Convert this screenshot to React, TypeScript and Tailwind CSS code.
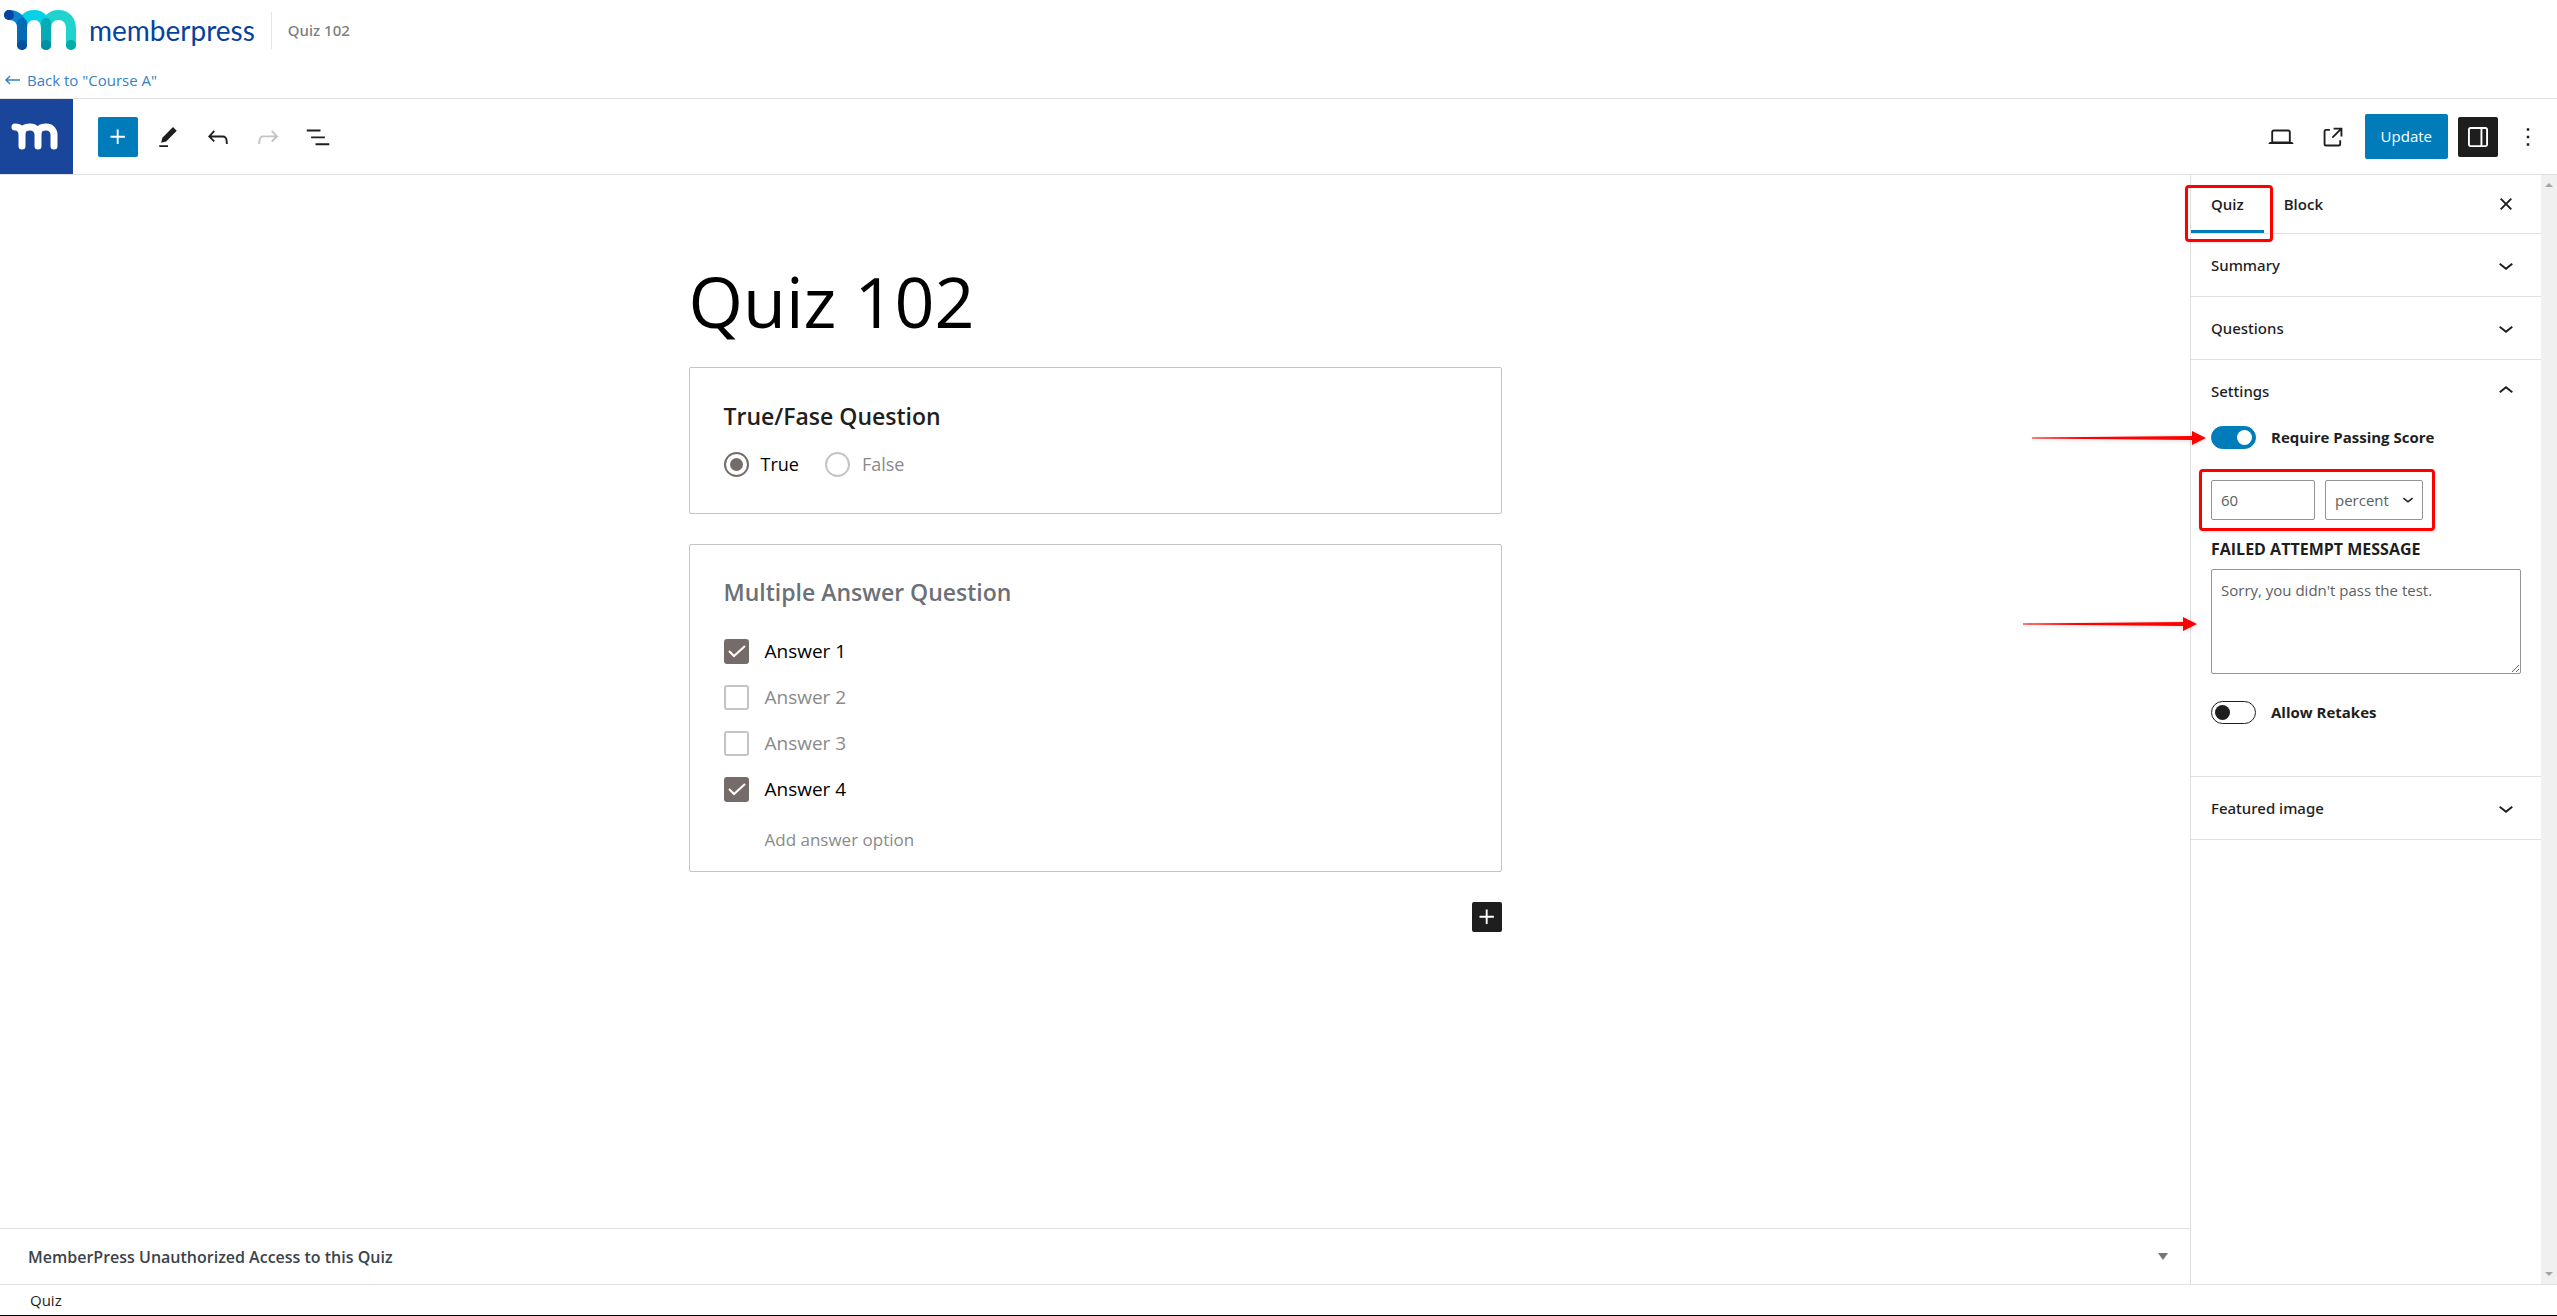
import { useState, type ReactNode } from 'react'
import clsx from 'clsx'

const ICONS = {
  plus: 'M11 12.5V17.5H12.5V12.5H17.5V11H12.5V6H11V11H6V12.5H11Z',
  pencil: 'm19 7-3-3-8.5 8.5-1 4 4-1L19 7Zm-7 11.5H5V20h7v-1.5Z',
  undo: 'M18.3 11.7c-.6-.6-1.4-.9-2.3-.9H6.7l2.9-3.3-1.1-1-4.5 5L8.5 16l1-1-2.7-2.7H16c.5 0 .9.2 1.3.5 1 1 1 3.4 1 4.5v.3h1.5v-.2c0-1.5 0-4.3-1.5-5.7z',
  redo: 'M15.6 6.5l-1.1 1 2.9 3.3H8c-.9 0-1.7.3-2.3.9-1.4 1.5-1.4 4.2-1.4 5.6v.2h1.5v-.3c0-1.1 0-3.5 1-4.5.3-.3.7-.5 1.3-.5h9.2L14.5 15l1.1 1.1 4.6-4.6-4.6-5z',
  list: 'M3 6h11v1.5H3V6Zm3.5 5.5h11V13h-11v-1.5ZM21 17H10v1.5h11V17Z',
  desktop: 'M20.5 16h-.7V8c0-1.1-.9-2-2-2H6.2c-1.1 0-2 .9-2 2v8h-.7c-.8 0-1.5.7-1.5 1.5h20c0-.8-.7-1.5-1.5-1.5zM5.7 8c0-.3.2-.5.5-.5h11.6c.3 0 .5.2.5.5v7.6H5.7V8z',
  external: 'M19.5 4.5h-7V6h4.44l-5.97 5.97 1.06 1.06L18 7.06v4.44h1.5v-7Zm-13 1a2 2 0 0 0-2 2v10a2 2 0 0 0 2 2h10a2 2 0 0 0 2-2v-3H17v3a.5.5 0 0 1-.5.5h-10a.5.5 0 0 1-.5-.5v-10a.5.5 0 0 1 .5-.5h3V5.5h-3Z',
  drawer: 'M18 4H6c-1.1 0-2 .9-2 2v12c0 1.1.9 2 2 2h12c1.1 0 2-.9 2-2V6c0-1.1-.9-2-2-2zm-4 14.5H6c-.3 0-.5-.2-.5-.5V6c0-.3.2-.5.5-.5h8v13zm4.5-.5c0 .3-.2.5-.5.5h-2.5v-13H18c.3 0 .5.2.5.5v12z',
  more: 'M13 19h-2v-2h2v2zm0-6h-2v-2h2v2zm0-6h-2V5h2v2z',
  close: 'M12 13.06l3.712 3.713 1.061-1.06L13.061 12l3.712-3.712-1.06-1.06L12 10.938 8.288 7.227l-1.061 1.06L10.939 12l-3.712 3.712 1.06 1.061L12 13.061z',
  down: 'M17.5 11.6L12 16l-5.5-4.4.9-1.2L12 14l4.5-3.6 1 1.2z',
  up: 'M6.5 12.4L12 8l5.5 4.4-.9 1.2L12 10l-4.5 3.6-1-1.2z',
}

function Icon({ name, className = 'size-[30px]' }: { name: keyof typeof ICONS; className?: string }) {
  return (
    <svg viewBox="0 0 24 24" className={className} fill="currentColor" fillRule="evenodd" aria-hidden="true">
      <path d={ICONS[name]} />
    </svg>
  )
}

function ToolButton({ icon, label, className }: { icon: keyof typeof ICONS; label: string; className?: string }) {
  return (
    <button type="button" aria-label={label} className={clsx('flex size-10 items-center justify-center rounded-xs', className)}>
      <Icon name={icon} />
    </button>
  )
}

function LogoMark() {
  return (
    <svg viewBox="0 0 73 40" className="h-10 w-[73px]" fill="none" strokeWidth="10" strokeLinecap="round" aria-hidden="true">
      <path d="M42 35V19C42 10 47 5 54.500 5S67 10 67 19V35" stroke="#21d3cf" />
      <path d="M18 19C18 10 23 5 30 5S42 10 42 19V35" stroke="#06d2e6" />
      <path d="M5 5C13 5 18 10 18 18" stroke="#0a84d0" />
      <path d="M18 13V35" stroke="#046cb5" />
      <path d="M42 13V35" stroke="#06acb5" />
      <circle cx="5" cy="5" r="5" fill="#06429e" />
      <circle cx="18" cy="35" r="5" fill="#05509b" />
      <circle cx="42" cy="35" r="5" fill="#048fa0" />
      <circle cx="67" cy="35" r="5" fill="#06aca8" />
    </svg>
  )
}

function Panel({ title, open, children }: { title: string; open?: boolean; children?: ReactNode }) {
  return (
    <section className="border-b border-[#e0e0e0]">
      <h2>
        <button type="button" aria-expanded={!!open} className="flex h-[62px] w-full items-center justify-between px-5 font-['Noto_Sans',sans-serif] text-[15px] font-medium">
          {title}
          <Icon name={open ? 'up' : 'down'} />
        </button>
      </h2>
      {children}
    </section>
  )
}

function Toggle({ label, defaultOn }: { label: string; defaultOn?: boolean }) {
  const [on, setOn] = useState(!!defaultOn)
  return (
    <label className="flex h-[23px] items-center gap-[15px] text-[15px] font-bold">
      <input
        type="checkbox"
        role="switch"
        checked={on}
        onChange={() => setOn(!on)}
        className="h-[23px] w-[45px] appearance-none rounded-full border border-[#1e1e1e] px-[3px] py-[3px] before:block before:size-[15px] before:rounded-full before:bg-[#1e1e1e] checked:border-[#007cba] checked:bg-[#007cba] checked:before:ml-[22px] checked:before:bg-white"
      />
      {label}
    </label>
  )
}

function Arrow({ className }: { className: string }) {
  return (
    <svg viewBox="0 0 174 16" className={clsx('pointer-events-none absolute right-full z-10 h-4 w-[174px] drop-shadow-sm', className)} fill="#fe0000" aria-hidden="true">
      <path d="M0 7.500L160 6V1L174 8L160 15V10L0 8.500Z" />
    </svg>
  )
}

function Answer({ text, defaultChecked }: { text: string; defaultChecked?: boolean }) {
  return (
    <label className="relative flex h-[46px] items-center gap-4">
      <input
        type="checkbox"
        defaultChecked={defaultChecked}
        className="peer size-[25px] appearance-none rounded-[3px] border-2 border-[#c4c4c4] checked:border-[#756c6a] checked:bg-[#756c6a]"
      />
      <span className="text-[#8a8a8a] peer-checked:text-black">{text}</span>
      <svg viewBox="0 0 25 25" className="absolute left-0 hidden size-[25px] peer-checked:block" fill="none" stroke="#fff" strokeWidth="2" aria-hidden="true">
        <path d="M5 12L10 17L21 7" />
      </svg>
    </label>
  )
}

export default function App() {
  return (
    <div className="flex min-h-screen flex-col border-b border-black bg-white font-['Open_Sans','Noto_Sans',sans-serif] text-[15px] text-[#1e1e1e]">
      <header className="h-[98px]">
        <div className="flex h-[60px] items-center pl-1">
          <LogoMark />
          <span className="ml-3 font-[Lato,sans-serif] text-[28px] leading-10 text-[#06429e]">memberpress</span>
          <span className="ml-4 flex h-[37px] items-center border-l border-[#e5e5e5] pl-4 font-['Noto_Sans',sans-serif] font-medium text-[#7d7d7d]">Quiz 102</span>
        </div>
        <a href="#course" className="flex h-10 items-center gap-[7px] pl-[5px] text-[15px] text-[#3582c4]">
          <svg viewBox="0 0 15 10" className="h-[10px] w-[15px]" fill="none" stroke="currentColor" strokeWidth="1.500" aria-hidden="true">
            <path d="M5 1L1 5L5 9M1 5H15" />
          </svg>
          Back to "Course A"
        </a>
      </header>

      <div className="flex h-[77px] items-center justify-between border-y border-[#e0e0e0] pr-[9px]">
        <div className="flex h-full items-center gap-[10px]">
          <a href="#dashboard" aria-label="MemberPress" className="mr-[15px] flex h-full w-[73px] items-center justify-center bg-[#19459b] pr-1">
            <svg viewBox="0 0 47 27" className="h-[27px] w-[47px]" fill="none" stroke="#fff" strokeWidth="7" strokeLinecap="round" strokeLinejoin="round" aria-hidden="true">
              <path d="M4 4C9 4 11 7 11 12V23M11 12C11 6 14 4 19 4S27 7 27 12V23M27 12C27 6 30 4 35 4S43 7 43 12V23" />
            </svg>
          </a>
          <ToolButton icon="plus" label="Add block" className="bg-[#007cba] text-white" />
          <ToolButton icon="pencil" label="Tools" />
          <ToolButton icon="undo" label="Undo" />
          <ToolButton icon="redo" label="Redo" className="text-[#c4c4c4]" />
          <ToolButton icon="list" label="Document overview" />
        </div>
        <div className="flex items-center gap-[10px]">
          <div className="flex items-center gap-3">
            <ToolButton icon="desktop" label="View" />
            <ToolButton icon="external" label="View quiz" />
            <button type="button" className="h-[45px] rounded-xs bg-[#007cba] px-4 text-[15px] text-white">Update</button>
          </div>
          <ToolButton icon="drawer" label="Settings" className="bg-[#1e1e1e] text-white" />
          <ToolButton icon="more" label="Options" />
        </div>
      </div>

      <div className="flex grow">
        <div className="flex grow flex-col">
          <main className="mx-auto w-[813px] grow pt-[76px] text-[19px]">
            <h1 className="text-[70px] leading-[100px] text-black">Quiz 102</h1>
            <section className="mt-4 h-[147px] rounded-xs border border-[#c4c4c4] px-[34px] pt-8">
              <h2 className="text-[23px] leading-8 font-semibold">True/Fase Question</h2>
              <div className="mt-[18px] flex gap-[26px] text-[18px]">
                {['True', 'False'].map((t) => (
                  <label key={t} className="flex items-center gap-3">
                    <input
                      type="radio"
                      name="truefalse"
                      defaultChecked={t === 'True'}
                      className="peer size-[25px] appearance-none rounded-full border-2 border-[#c4c4c4] p-[4px] checked:border-[#756c6a] checked:before:block checked:before:size-[13px] checked:before:rounded-full checked:before:bg-[#756c6a]"
                    />
                    <span className="leading-7 text-[#8a8a8a] peer-checked:text-black">{t}</span>
                  </label>
                ))}
              </div>
            </section>
            <section className="mt-[30px] h-[328px] rounded-xs border border-[#c4c4c4] px-[34px] pt-[31px]">
              <h2 className="text-[23px] leading-8 font-semibold text-[#6c7077]">Multiple Answer Question</h2>
              <div className="mt-5">
                <Answer text="Answer 1" defaultChecked />
                <Answer text="Answer 2" />
                <Answer text="Answer 3" />
                <Answer text="Answer 4" defaultChecked />
              </div>
              <button type="button" className="ml-[41px] text-[17px] leading-[56px] text-[#8a8a8a]">Add answer option</button>
            </section>
            <div className="mt-[30px] flex justify-end">
              <button type="button" aria-label="Add question" className="flex size-[30px] items-center justify-center rounded-xs bg-[#1e1e1e] text-white">
                <Icon name="plus" />
              </button>
            </div>
          </main>
          <button type="button" className="flex h-14 items-center justify-between border-t border-[#e0e0e0] pr-[22px] pl-7 text-[16px] font-semibold text-[#3c434a]">
            MemberPress Unauthorized Access to this Quiz
            <svg viewBox="0 0 10 7" className="h-[7px] w-[10px]" fill="#72777c" aria-hidden="true">
              <path d="M0 0H10L5 7Z" />
            </svg>
          </button>
        </div>

        <aside className="flex w-[367px] border-l border-[#e0e0e0]">
          <div className="relative grow">
            <div className="flex h-[59px] items-stretch border-b border-[#e0e0e0] pr-5 font-semibold">
              <button type="button" className="relative px-5 shadow-[inset_0_-3px_0_0_#007cba]">
                Quiz
                <span className="absolute top-[10px] -right-[9px] -bottom-[9px] -left-[6px] z-10 rounded-sm border-3 border-[#fe0000] shadow-sm" />
              </button>
              <button type="button" className="px-5">Block</button>
              <button type="button" aria-label="Close settings" className="ml-auto">
                <Icon name="close" />
              </button>
            </div>
            <Panel title="Summary" />
            <Panel title="Questions" />
            <Panel title="Settings" open>
              <div className="px-5 pt-1 pb-[52px]">
                <div className="relative">
                  <Arrow className="top-1 mr-[5px]" />
                  <Toggle label="Require Passing Score" defaultOn />
                </div>
                <div className="relative mt-[31px] flex w-fit gap-[10px] text-[#5c5f62]">
                  <input aria-label="Passing score" defaultValue="60" className="h-10 w-[104px] rounded-xs border border-[#949494] px-[9px]" />
                  <div className="relative">
                    <select aria-label="Score unit" className="h-10 w-[98px] appearance-none rounded-xs border border-[#949494] px-[9px]">
                      <option>percent</option>
                      <option>points</option>
                    </select>
                    <Icon name="down" className="pointer-events-none absolute top-2 right-1 size-[22px] text-[#1e1e1e]" />
                  </div>
                  <span className="pointer-events-none absolute -inset-x-3 -inset-y-[11px] rounded-sm border-3 border-[#fe0000] shadow-sm" />
                </div>
                <label htmlFor="failed" className="mt-[18px] block text-[16px] leading-[22px] font-bold uppercase">Failed attempt message</label>
                <div className="relative mt-[9px]">
                  <Arrow className="top-[47px] mr-[14px]" />
                  <textarea id="failed" defaultValue="Sorry, you didn't pass the test." className="block h-[105px] w-full rounded-xs border border-[#949494] px-[9px] py-[9px] text-[#5c5f62]" />
                </div>
                <div className="mt-[27px]">
                  <Toggle label="Allow Retakes" />
                </div>
              </div>
            </Panel>
            <Panel title="Featured image" />
          </div>
          <div className="flex w-4 flex-col justify-between bg-[#f0f0f0] px-1 py-2">
            <svg viewBox="0 0 8 4" className="h-1 w-2" fill="#a3a3a3" aria-hidden="true"><path d="M0 4L4 0L8 4Z" /></svg>
            <svg viewBox="0 0 8 4" className="h-1 w-2" fill="#a3a3a3" aria-hidden="true"><path d="M0 0L4 4L8 0Z" /></svg>
          </div>
        </aside>
      </div>

      <footer className="flex h-[31px] items-center border-t border-[#e0e0e0] pl-[30px]">Quiz</footer>
    </div>
  )
}
